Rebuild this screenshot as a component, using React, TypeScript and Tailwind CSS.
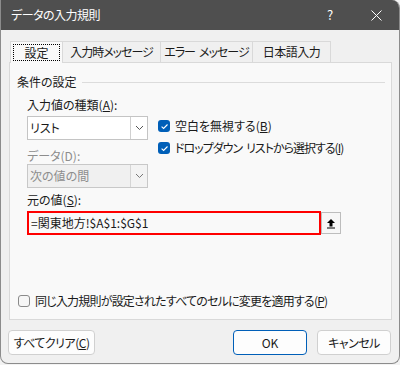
import React from "react";

const F = {
  fontFamily: '"Noto Sans CJK JP", "Noto Sans", sans-serif',
  fontFeatureSettings: '"palt"',
};

function Check({ checked }: { checked: boolean }) {
  return checked ? (
    <div className="w-[12px] h-[12px] rounded-[3px] bg-[#005fb8] flex items-center justify-center shrink-0">
      <svg width="9" height="9" viewBox="0 0 9 9">
        <path d="M1.6 4.6 L3.6 6.5 L7.5 2.5" fill="none" stroke="white" strokeWidth="1.1" />
      </svg>
    </div>
  ) : (
    <div className="w-[12px] h-[12px] rounded-[3px] border border-[#8a8a8a] bg-[#f6f6f6] shrink-0" />
  );
}

function Chevron({ color = "#555" }: { color?: string }) {
  return (
    <svg width="9" height="6" viewBox="0 0 9 6">
      <path d="M1 1 L4.5 4.5 L8 1" fill="none" stroke={color} strokeWidth="1" />
    </svg>
  );
}

function Sp() {
  return <span className="inline-block w-[4px]" />;
}

export default function App() {
  return (
    <div className="w-[400px] h-[365px] bg-[#f3f3f3] overflow-hidden text-[12px] leading-[16px] text-[#1a1a1a]" style={F}>
      <div className="w-[400px] h-[364px] rounded-tr-[8px] rounded-b-[8px] border-l border-r border-b border-[#8c8c8c] bg-[#f0f0f0] flex flex-col overflow-hidden">
        {/* title bar */}
        <div className="h-[30px] bg-[#4f4f4f] flex items-center text-white shrink-0">
          <div className="pl-[10px] text-[12px] flex-1 tracking-[-0.5px]">データの入力規則</div>
          <div className="w-[46px] text-center text-[13px]">?</div>
          <div className="w-[46px] flex justify-center">
            <svg width="11" height="11" viewBox="0 0 11 11">
              <path d="M0.5 0.5 L10.5 10.5 M10.5 0.5 L0.5 10.5" stroke="white" strokeWidth="1" />
            </svg>
          </div>
        </div>
        {/* tabs */}
        <div className="pl-[9px] h-[32px] flex items-end shrink-0 whitespace-nowrap">
          <div className="h-[22px] w-[53px] bg-[#f9f9f9] border border-b-0 border-[#d9d9d9] flex items-center justify-center relative z-10 -mb-px">
            <div className="border border-dotted border-black w-[47px] h-[17px] flex items-center justify-center">設定</div>
          </div>
          <div className="h-[21px] w-[98px] border-t border-r border-[#d9d9d9] bg-[#f0f0f0] flex items-center justify-center tracking-[-1px]">入力時メッセージ</div>
          <div className="h-[21px] w-[92px] border-t border-r border-[#d9d9d9] bg-[#f0f0f0] flex items-center justify-center tracking-[-1px]">
            エラー<Sp />メッセージ
          </div>
          <div className="h-[21px] w-[78px] border-t border-r border-[#d9d9d9] bg-[#f0f0f0] flex items-center justify-center tracking-[-0.5px]">日本語入力</div>
        </div>
        {/* panel */}
        <div className="ml-[8px] w-[383px] h-[258px] bg-[#f9f9f9] border border-[#d9d9d9] flex flex-col shrink-0">
          <div className="flex items-center mt-[11px] h-[16px] pl-[7px] pr-[6px]">
            <span>条件の設定</span>
            <div className="flex-1 h-px bg-[#dcdcdc] ml-[5px]" />
          </div>
          <div className="pl-[17px] mt-[6px] flex">
            <div className="flex flex-col w-[121px]">
              <div className="h-[17px] leading-[17px]">
                入力値の種類(<span className="underline">A</span>):
              </div>
              <div className="mt-[3px] h-[24px] border border-[#c4c4c4] bg-white flex items-stretch">
                <div className="flex-1 pl-[2px] flex items-center">リスト</div>
                <div className="w-[17px] border-l border-[#d0d0d0] flex items-center justify-center">
                  <Chevron />
                </div>
              </div>
              <div className="mt-[7px] h-[17px] leading-[17px] text-[#8d8d8d]">データ(D):</div>
              <div className="h-[24px] border border-[#c8c8c8] bg-[#f0f0f0] flex items-stretch text-[#8d8d8d]">
                <div className="flex-1 pl-[2px] flex items-center">次の値の間</div>
                <div className="w-[17px] border-l border-[#d5d5d5] bg-[#f3f3f3] flex items-center justify-center">
                  <Chevron color="#777" />
                </div>
              </div>
            </div>
            <div className="flex flex-col pl-[10px] pt-[22px] gap-[6px]">
              <div className="flex items-center gap-[5px] h-[16px]">
                <Check checked />
                <span>空白を無視する(<span className="underline">B</span>)</span>
              </div>
              <div className="flex items-center gap-[5px] h-[16px]">
                <Check checked />
                <span className="whitespace-nowrap tracking-[-1px]">
                  ドロップダウン<Sp />リストから選択する(<span className="underline">I</span>)
                </span>
              </div>
            </div>
          </div>
          <div className="pl-[17px] mt-[4px] h-[16px] leading-[16px]">
            元の値(<span className="underline">S</span>):
          </div>
          <div className="pl-[17px] mt-[3px] flex items-center">
            <div className="w-[294px] h-[24px] border-2 border-[#ff0000] bg-[#f9f9f9] flex items-center pl-[2px]">
              =関東地方!$A$1:$G$1
            </div>
            <div className="w-[20px] h-[22px] border border-[#bdbdbd] bg-[#f7f7f7] flex items-center justify-center">
              <svg width="10" height="11" viewBox="0 0 10 11">
                <path d="M5 1 L1 5 H3.5 V8.5 H6.5 V5 H9 Z" fill="black" />
                <rect x="1" y="9.5" width="8" height="1" fill="black" />
              </svg>
            </div>
          </div>
          <div className="flex-1" />
          <div className="flex items-center gap-[5px] mb-[10px] pl-[8px] h-[16px]">
            <Check checked={false} />
            <span className="whitespace-nowrap tracking-[-0.8px]">同じ入力規則が設定されたすべてのセルに変更を適用する(<span className="underline">P</span>)</span>
          </div>
        </div>
        {/* buttons */}
        <div className="flex items-center pl-[7px] pr-[8px] mt-[10px]">
          <div className="h-[25px] w-[87px] rounded-[4px] border border-[#d0d0d0] bg-[#fdfdfd] flex items-center justify-center tracking-[-0.5px]">
            すべてクリア(<span className="underline">C</span>)
          </div>
          <div className="flex-1" />
          <div className="h-[25px] w-[74px] rounded-[4px] border border-[#005fb8] bg-[#fdfdfd] flex items-center justify-center">OK</div>
          <div className="h-[25px] w-[74px] ml-[10px] rounded-[4px] border border-[#d0d0d0] bg-[#fdfdfd] flex items-center justify-center tracking-[-0.5px]">キャンセル</div>
        </div>
      </div>
    </div>
  );
}
